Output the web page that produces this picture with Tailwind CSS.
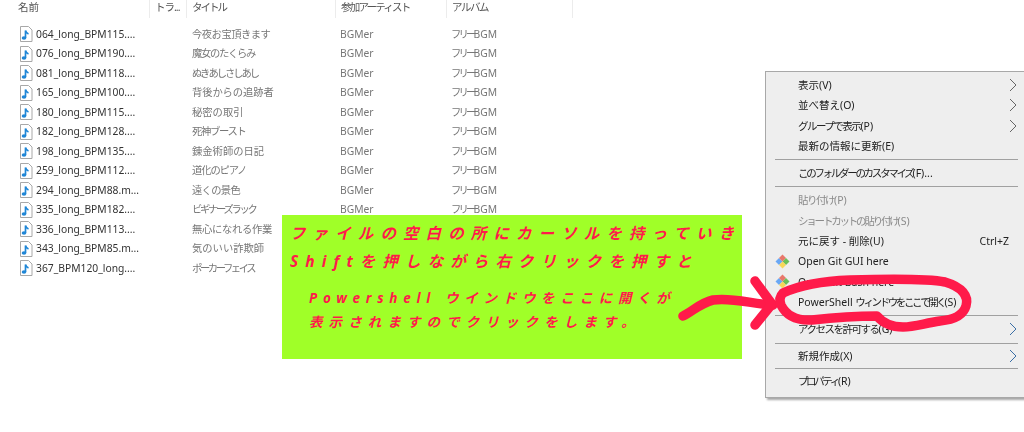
<!DOCTYPE html>
<html lang="ja">
<head>
<meta charset="utf-8">
<script src="https://cdn.jsdelivr.net/npm/@tailwindcss/browser@4"></script>
</head>
<body class="bg-white overflow-hidden">
<div class="relative w-[1024px] h-[432px] overflow-hidden font-['Noto_Sans','Noto_Sans_CJK_JP',sans-serif] blur-[0.35px]">
  <!-- header -->
  <div class="flex h-[18px] text-[10.5px] leading-[14px] text-[#555]">
    <div class="w-[150px] pl-[18px] border-r border-[#ececec]">名前</div>
    <div class="w-[37px] pl-[5px] border-r border-[#ececec] tracking-[-1px]">トラ...</div>
    <div class="w-[149px] pl-[5px] border-r border-[#ececec] tracking-[-2px]">タイトル</div>
    <div class="w-[111px] pl-[5px] border-r border-[#ececec] tracking-[-1.8px]">参加アーティスト</div>
    <div class="w-[126px] pl-[5px] border-r border-[#ececec] tracking-[-1.5px]">アルバム</div>
  </div>
  <!-- rows -->
  <div class="flex flex-col mt-[6.500px] text-[10.3px] leading-[19.5px] text-[#777]">
    <div class="flex h-[19.5px]"><div class="w-[192px] flex items-center pl-[19px] gap-[3px] text-[#333]"><svg class="w-[14px] h-[16px]" viewBox="0 0 14 16"><path d="M1.5.5h8l3.5 3.5v11.500h-11.500z" fill="#fff" stroke="#a8a8a8"/><path d="M6.500 12V4.500q.5 2.500 3 3.500" fill="none" stroke="#1f86d6" stroke-width="1.700"/><ellipse cx="5" cy="12" rx="2.300" ry="1.800" fill="#1f86d6"/></svg>064_long_BPM115....</div><div class="w-[148px] tracking-[-0.5px]">今夜お宝頂きます</div><div class="w-[111px]">BGMer</div><div><span class="tracking-[-2.8px]">フリー</span>BGM</div></div>
    <div class="flex h-[19.5px]"><div class="w-[192px] flex items-center pl-[19px] gap-[3px] text-[#333]"><svg class="w-[14px] h-[16px]" viewBox="0 0 14 16"><path d="M1.5.5h8l3.5 3.5v11.500h-11.500z" fill="#fff" stroke="#a8a8a8"/><path d="M6.500 12V4.500q.5 2.500 3 3.500" fill="none" stroke="#1f86d6" stroke-width="1.700"/><ellipse cx="5" cy="12" rx="2.300" ry="1.800" fill="#1f86d6"/></svg>076_long_BPM190....</div><div class="w-[148px] tracking-[-1.300px]">魔女のたくらみ</div><div class="w-[111px]">BGMer</div><div><span class="tracking-[-2.8px]">フリー</span>BGM</div></div>
    <div class="flex h-[19.5px]"><div class="w-[192px] flex items-center pl-[19px] gap-[3px] text-[#333]"><svg class="w-[14px] h-[16px]" viewBox="0 0 14 16"><path d="M1.5.5h8l3.5 3.5v11.500h-11.500z" fill="#fff" stroke="#a8a8a8"/><path d="M6.500 12V4.500q.5 2.500 3 3.500" fill="none" stroke="#1f86d6" stroke-width="1.700"/><ellipse cx="5" cy="12" rx="2.300" ry="1.800" fill="#1f86d6"/></svg>081_long_BPM118....</div><div class="w-[148px] tracking-[-2px]">ぬきあしさしあし</div><div class="w-[111px]">BGMer</div><div><span class="tracking-[-2.8px]">フリー</span>BGM</div></div>
    <div class="flex h-[19.5px]"><div class="w-[192px] flex items-center pl-[19px] gap-[3px] text-[#333]"><svg class="w-[14px] h-[16px]" viewBox="0 0 14 16"><path d="M1.5.5h8l3.5 3.5v11.500h-11.500z" fill="#fff" stroke="#a8a8a8"/><path d="M6.500 12V4.500q.5 2.500 3 3.500" fill="none" stroke="#1f86d6" stroke-width="1.700"/><ellipse cx="5" cy="12" rx="2.300" ry="1.800" fill="#1f86d6"/></svg>165_long_BPM100....</div><div class="w-[148px] tracking-[-0.1px]">背後からの追跡者</div><div class="w-[111px]">BGMer</div><div><span class="tracking-[-2.8px]">フリー</span>BGM</div></div>
    <div class="flex h-[19.5px]"><div class="w-[192px] flex items-center pl-[19px] gap-[3px] text-[#333]"><svg class="w-[14px] h-[16px]" viewBox="0 0 14 16"><path d="M1.5.5h8l3.5 3.5v11.500h-11.500z" fill="#fff" stroke="#a8a8a8"/><path d="M6.500 12V4.500q.5 2.500 3 3.500" fill="none" stroke="#1f86d6" stroke-width="1.700"/><ellipse cx="5" cy="12" rx="2.300" ry="1.800" fill="#1f86d6"/></svg>180_long_BPM115....</div><div class="w-[148px]">秘密の取引</div><div class="w-[111px]">BGMer</div><div><span class="tracking-[-2.8px]">フリー</span>BGM</div></div>
    <div class="flex h-[19.5px]"><div class="w-[192px] flex items-center pl-[19px] gap-[3px] text-[#333]"><svg class="w-[14px] h-[16px]" viewBox="0 0 14 16"><path d="M1.5.5h8l3.5 3.5v11.500h-11.500z" fill="#fff" stroke="#a8a8a8"/><path d="M6.500 12V4.500q.5 2.500 3 3.500" fill="none" stroke="#1f86d6" stroke-width="1.700"/><ellipse cx="5" cy="12" rx="2.300" ry="1.800" fill="#1f86d6"/></svg>182_long_BPM128....</div><div class="w-[148px] tracking-[-1.300px]">死神ブースト</div><div class="w-[111px]">BGMer</div><div><span class="tracking-[-2.8px]">フリー</span>BGM</div></div>
    <div class="flex h-[19.5px]"><div class="w-[192px] flex items-center pl-[19px] gap-[3px] text-[#333]"><svg class="w-[14px] h-[16px]" viewBox="0 0 14 16"><path d="M1.5.5h8l3.5 3.5v11.500h-11.500z" fill="#fff" stroke="#a8a8a8"/><path d="M6.500 12V4.500q.5 2.500 3 3.500" fill="none" stroke="#1f86d6" stroke-width="1.700"/><ellipse cx="5" cy="12" rx="2.300" ry="1.800" fill="#1f86d6"/></svg>198_long_BPM135....</div><div class="w-[148px]">錬金術師の日記</div><div class="w-[111px]">BGMer</div><div><span class="tracking-[-2.8px]">フリー</span>BGM</div></div>
    <div class="flex h-[19.5px]"><div class="w-[192px] flex items-center pl-[19px] gap-[3px] text-[#333]"><svg class="w-[14px] h-[16px]" viewBox="0 0 14 16"><path d="M1.5.5h8l3.5 3.5v11.500h-11.500z" fill="#fff" stroke="#a8a8a8"/><path d="M6.500 12V4.500q.5 2.500 3 3.500" fill="none" stroke="#1f86d6" stroke-width="1.700"/><ellipse cx="5" cy="12" rx="2.300" ry="1.800" fill="#1f86d6"/></svg>259_long_BPM112....</div><div class="w-[148px] tracking-[-1.100px]">道化のピアノ</div><div class="w-[111px]">BGMer</div><div><span class="tracking-[-2.8px]">フリー</span>BGM</div></div>
    <div class="flex h-[19.5px]"><div class="w-[192px] flex items-center pl-[19px] gap-[3px] text-[#333]"><svg class="w-[14px] h-[16px]" viewBox="0 0 14 16"><path d="M1.5.5h8l3.5 3.5v11.500h-11.500z" fill="#fff" stroke="#a8a8a8"/><path d="M6.500 12V4.500q.5 2.500 3 3.500" fill="none" stroke="#1f86d6" stroke-width="1.700"/><ellipse cx="5" cy="12" rx="2.300" ry="1.800" fill="#1f86d6"/></svg>294_long_BPM88.m...</div><div class="w-[148px] tracking-[-0.7px]">遠くの景色</div><div class="w-[111px]">BGMer</div><div><span class="tracking-[-2.8px]">フリー</span>BGM</div></div>
    <div class="flex h-[19.5px]"><div class="w-[192px] flex items-center pl-[19px] gap-[3px] text-[#333]"><svg class="w-[14px] h-[16px]" viewBox="0 0 14 16"><path d="M1.5.5h8l3.5 3.5v11.500h-11.500z" fill="#fff" stroke="#a8a8a8"/><path d="M6.500 12V4.500q.5 2.500 3 3.500" fill="none" stroke="#1f86d6" stroke-width="1.700"/><ellipse cx="5" cy="12" rx="2.300" ry="1.800" fill="#1f86d6"/></svg>335_long_BPM182....</div><div class="w-[148px] tracking-[-2.300px]">ビギナーズラック</div><div class="w-[111px]">BGMer</div><div><span class="tracking-[-2.8px]">フリー</span>BGM</div></div>
    <div class="flex h-[19.5px]"><div class="w-[192px] flex items-center pl-[19px] gap-[3px] text-[#333]"><svg class="w-[14px] h-[16px]" viewBox="0 0 14 16"><path d="M1.5.5h8l3.5 3.5v11.500h-11.500z" fill="#fff" stroke="#a8a8a8"/><path d="M6.500 12V4.500q.5 2.500 3 3.500" fill="none" stroke="#1f86d6" stroke-width="1.700"/><ellipse cx="5" cy="12" rx="2.300" ry="1.800" fill="#1f86d6"/></svg>336_long_BPM113....</div><div class="w-[148px] tracking-[-0.3px]">無心になれる作業</div></div>
    <div class="flex h-[19.5px]"><div class="w-[192px] flex items-center pl-[19px] gap-[3px] text-[#333]"><svg class="w-[14px] h-[16px]" viewBox="0 0 14 16"><path d="M1.5.5h8l3.5 3.5v11.500h-11.500z" fill="#fff" stroke="#a8a8a8"/><path d="M6.500 12V4.500q.5 2.500 3 3.500" fill="none" stroke="#1f86d6" stroke-width="1.700"/><ellipse cx="5" cy="12" rx="2.300" ry="1.800" fill="#1f86d6"/></svg>343_long_BPM85.m...</div><div class="w-[148px]">気のいい詐欺師</div></div>
    <div class="flex h-[19.5px]"><div class="w-[192px] flex items-center pl-[19px] gap-[3px] text-[#333]"><svg class="w-[14px] h-[16px]" viewBox="0 0 14 16"><path d="M1.5.5h8l3.5 3.5v11.500h-11.500z" fill="#fff" stroke="#a8a8a8"/><path d="M6.500 12V4.500q.5 2.500 3 3.500" fill="none" stroke="#1f86d6" stroke-width="1.700"/><ellipse cx="5" cy="12" rx="2.300" ry="1.800" fill="#1f86d6"/></svg>367_BPM120_long....</div><div class="w-[148px] tracking-[-2.400px]">ポーカーフェイス</div></div>
  </div>

  <!-- green note -->
  <div class="absolute left-[282px] top-[215px] w-[460px] h-[144px] bg-[#a0ff28] text-[#ff1a4a] font-bold italic text-[15.5px] pl-[8px] pt-[6px]">
    <div class="h-[28px] leading-[24px] tracking-[7.1px] whitespace-nowrap">ファイルの空白の所にカーソルを持っていき</div>
    <div class="h-[28px] leading-[24px] tracking-[7.1px] whitespace-nowrap">Shiftを押しながら右クリックを押すと</div>
    <div class="pl-[19px] pt-[9.5px] text-[13.5px]">
      <div class="h-[24.5px] leading-[22px] whitespace-nowrap tracking-[5.7px]">Powershell ウインドウをここに開くが</div>
      <div class="h-[24.5px] leading-[22px] whitespace-nowrap tracking-[6.100px]">表示されますのでクリックをします。</div>
    </div>
  </div>

  <!-- context menu -->
  <div class="absolute left-[765px] top-[71px] w-[270px] h-[327px] bg-[#eeeeee] border border-[#a8a8a8] shadow-[2px_2px_2px_rgba(0,0,0,0.35)] pt-[3px] text-[10.5px] leading-[20.3px] text-[#222]">
    <div class="flex justify-between h-[20.3px] pl-[32px] pr-[17px] items-center"><span>表示(V)</span><svg class="w-[8px] h-[14px]" viewBox="0 0 8 14"><path d="M1 1l6 6-6 6" fill="none" stroke="#666" stroke-width="1"/></svg></div>
    <div class="flex justify-between h-[20.3px] pl-[32px] pr-[17px] items-center"><span>並べ替え(O)</span><svg class="w-[8px] h-[14px]" viewBox="0 0 8 14"><path d="M1 1l6 6-6 6" fill="none" stroke="#666" stroke-width="1"/></svg></div>
    <div class="flex justify-between h-[20.3px] pl-[32px] pr-[17px] items-center"><span><span class="tracking-[-1.5px]">グループで表示</span>(P)</span><svg class="w-[8px] h-[14px]" viewBox="0 0 8 14"><path d="M1 1l6 6-6 6" fill="none" stroke="#666" stroke-width="1"/></svg></div>
    <div class="h-[20.3px] pl-[32px]">最新の情報に更新(E)</div>
    <div class="h-px bg-[#a0a0a0] ml-[9px] mr-[16px] my-[3px]"></div>
    <div class="h-[20.3px] pl-[32px]"><span class="tracking-[-2.3px]">このフォルダーのカスタマイズ</span>(F)...</div>
    <div class="h-px bg-[#a0a0a0] ml-[9px] mr-[16px] my-[3px]"></div>
    <div class="h-[20.3px] pl-[32px] text-[#8a8a8a]"><span class="tracking-[-1.5px]">貼り付け</span>(P)</div>
    <div class="h-[20.3px] pl-[32px] text-[#8a8a8a]"><span class="tracking-[-2.2px]">ショートカットの貼り付け</span>(S)</div>
    <div class="flex justify-between h-[20.3px] pl-[32px] pr-[25px]"><span>元に戻す - 削除(U)</span><span>Ctrl+Z</span></div>
    <div class="flex items-center h-[20.3px] pl-[9px] gap-[8px]"><svg class="w-[15px] h-[15px]" viewBox="0 0 15 15"><path d="M4 4l3.500 3.500L4 11 .5 7.500z" fill="#6aa8f5"/><path d="M7.500 .5L11 4 7.500 7.500 4 4z" fill="#e8786a"/><path d="M11 4l3.500 3.500L11 11 7.500 7.500z" fill="#6cc05a"/><path d="M7.500 7.500L11 11l-3.500 3.500L4 11z" fill="#f7d75a"/></svg><span>Open Git GUI here</span></div>
    <div class="flex items-center h-[20.3px] pl-[9px] gap-[8px]"><svg class="w-[15px] h-[15px]" viewBox="0 0 15 15"><path d="M4 4l3.500 3.500L4 11 .5 7.500z" fill="#6aa8f5"/><path d="M7.500 .5L11 4 7.500 7.500 4 4z" fill="#e8786a"/><path d="M11 4l3.500 3.500L11 11 7.500 7.500z" fill="#6cc05a"/><path d="M7.500 7.500L11 11l-3.500 3.500L4 11z" fill="#f7d75a"/></svg><span>Open Git Bash here</span></div>
    <div class="h-[20.3px] pl-[32px]">PowerShell <span class="tracking-[-2.4px]">ウィンドウをここで開く</span>(S)</div>
    <div class="h-px bg-[#a0a0a0] ml-[9px] mr-[16px] my-[3px]"></div>
    <div class="flex justify-between h-[20.3px] pl-[32px] pr-[17px] items-center"><span><span class="tracking-[-1.5px]">アクセスを許可する</span>(G)</span><svg class="w-[8px] h-[14px]" viewBox="0 0 8 14"><path d="M1 1l6 6-6 6" fill="none" stroke="#3a6ea5" stroke-width="1"/></svg></div>
    <div class="h-px bg-[#a0a0a0] ml-[9px] mr-[16px] mt-[3px] mb-[2px]"></div>
    <div class="flex justify-between h-[20.3px] pl-[32px] pr-[17px] items-center"><span>新規作成(X)</span><svg class="w-[8px] h-[14px]" viewBox="0 0 8 14"><path d="M1 1l6 6-6 6" fill="none" stroke="#3a6ea5" stroke-width="1"/></svg></div>
    <div class="h-px bg-[#a0a0a0] ml-[9px] mr-[16px] mt-[2px] mb-[2px]"></div>
    <div class="h-[20.3px] pl-[32px]"><span class="tracking-[-2.4px]">プロパティ</span>(R)</div>
  </div>

  <!-- red marker annotation -->
  <svg class="absolute inset-0 w-[1024px] h-[432px] pointer-events-none" viewBox="0 0 1024 432" fill="none" stroke="#ff1a4a" stroke-width="9.5" stroke-linecap="round" stroke-linejoin="round">
    <path d="M683 316C692 312 700 303 713 300C732 297 752 304 773 305"/>
    <path d="M755 281L772 304L755 325"/>
    <path d="M783 293C800 285 825 281 850 280C885 279 925 278 945 282C962 287 969 296 966 306C963 316 952 320 940 321C925 323 915 327 903 327C890 327 882 322 877 316C860 316 830 318 812 320C795 321 786 315 781 305C779 300 780 296 783 293"/>
  </svg>
</div>
</body>
</html>
